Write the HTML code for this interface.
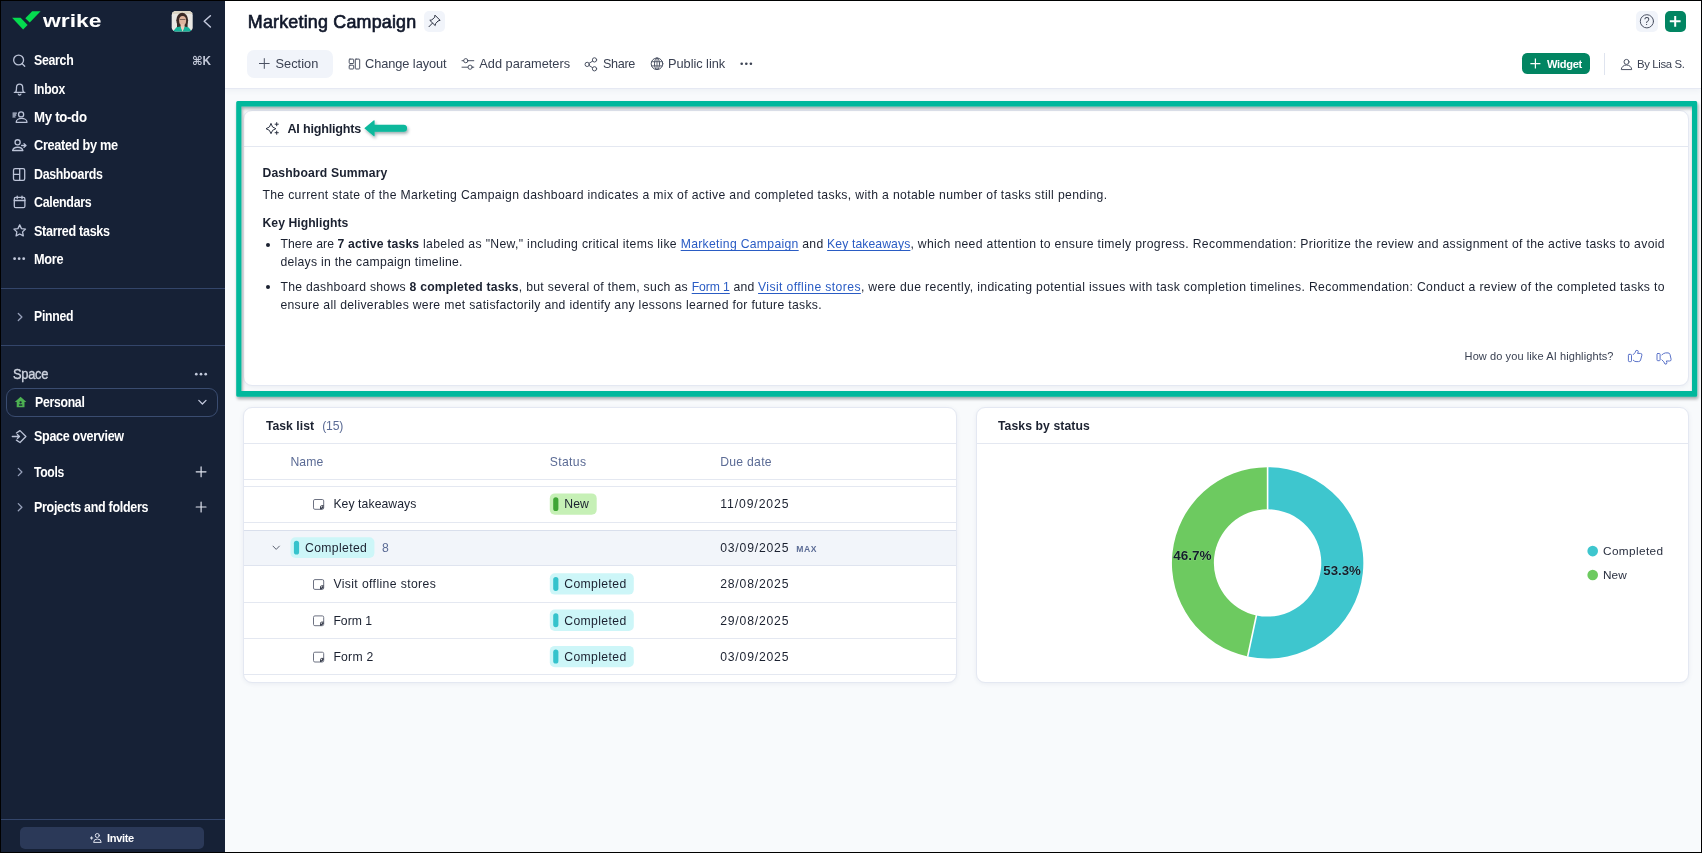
<!DOCTYPE html>
<html lang="en"><head><meta charset="utf-8"><title>Marketing Campaign - Wrike</title>
<style>
*{box-sizing:border-box;margin:0;padding:0}
html,body{width:1702px;height:853px;overflow:hidden;background:#000}
body{position:relative;font-family:"Liberation Sans","DejaVu Sans",sans-serif}
.a{position:absolute}
.t{position:absolute;white-space:nowrap;line-height:20px;height:20px}
.t b{font-weight:700}
.lk{color:#2a5cc4;text-decoration:underline;text-decoration-thickness:1px;text-underline-offset:2px}
#side{left:1px;top:1px;width:224px;height:851px;background:#162136}
#main{left:225px;top:1px;width:1476px;height:851px;background:#f8fafc}
#hdr{left:225px;top:1px;width:1476px;height:87px;background:#fff;box-shadow:0 1px 0 #e6e9f3,0 2px 6px rgba(60,80,130,.07)}
.sep{height:1px;background:#33456a;left:1px;width:224px}
.card{background:#fff;border:1px solid #e4e8f2;border-radius:9px;box-shadow:0 1px 4px rgba(60,80,130,.08)}
.hl{height:1px;background:#e4e8f1}
.btnlite{background:#f1f4fa;border-radius:5px}
.badge{border-radius:5px}
.bar{border-radius:3px}
</style></head>
<body>
<div class="a" id="main"></div>
<div class="a" id="hdr"></div>
<div class="a" id="side"></div>

<!-- sidebar pieces -->
<div class="a sep" style="top:288px"></div>
<div class="a sep" style="top:345px"></div>
<div class="a sep" style="top:819px"></div>
<div class="a" style="left:5.5px;top:388px;width:212.5px;height:28.5px;border:1px solid #3a4c70;border-radius:9px"></div>
<div class="a" style="left:20px;top:827px;width:184px;height:21.5px;background:#2b3958;border-radius:5px"></div>
<span class="a" id="wrike" style="left:43.3px;top:9px;font-size:19.2px;font-weight:700;color:#fff;line-height:24px;white-space:nowrap;transform-origin:0 0;transform:scaleX(1.19);letter-spacing:0px">wrike</span>

<!-- header buttons -->
<div class="a btnlite" style="left:423.5px;top:10.8px;width:21.5px;height:21.2px;border-radius:5px"></div>
<div class="a btnlite" style="left:247.2px;top:50.2px;width:85.5px;height:27.4px;border-radius:7px"></div>
<div class="a btnlite" style="left:1636px;top:10.9px;width:21.6px;height:20.8px;border-radius:5px"></div>
<div class="a" style="left:1664.6px;top:10.9px;width:21.2px;height:20.8px;border-radius:5px;background:#028562"></div>
<div class="a" style="left:1522px;top:53.4px;width:68px;height:21px;border-radius:5.5px;background:#028562"></div>
<div class="a" style="left:1604px;top:53px;width:1px;height:21.5px;background:#dfe4ef"></div>

<!-- AI highlights -->
<div class="a card" style="left:243px;top:110px;width:1446px;height:276px"></div>
<div class="a hl" style="left:244px;top:146px;width:1444px"></div>

<div class="a" style="left:265.6px;top:242.8px;width:4px;height:4px;border-radius:50%;background:#1b2130"></div>
<div class="a" style="left:265.6px;top:285.4px;width:4px;height:4px;border-radius:50%;background:#1b2130"></div>

<!-- Task list card -->
<div class="a card" style="left:243px;top:407px;width:714px;height:276px;overflow:hidden"></div>
<div class="a hl" style="left:244px;top:443px;width:712px"></div>
<div class="a hl" style="left:244px;top:479px;width:712px"></div>
<div class="a hl" style="left:244px;top:486px;width:712px"></div>
<div class="a hl" style="left:244px;top:522px;width:712px"></div>
<div class="a" style="left:244px;top:530px;width:712px;height:36px;background:#f2f5fa;border-top:1px solid #d9dfec;border-bottom:1px solid #dfe4ef"></div>
<div class="a hl" style="left:244px;top:602px;width:712px"></div>
<div class="a hl" style="left:244px;top:638px;width:712px"></div>
<div class="a hl" style="left:244px;top:674px;width:712px"></div>
<!-- badges -->
<svg class="a" style="left:0;top:0" width="1702" height="853" viewBox="0 0 1702 853">
<defs><filter id="fsh" x="-2%" y="-5%" width="104%" height="112%"><feDropShadow dx="1" dy="2.2" stdDeviation="1.7" flood-color="#0a1420" flood-opacity=".36"/></filter></defs>
<path filter="url(#fsh)" fill="#00b89c" fill-rule="evenodd" d="M237.7 101 H1695.7 Q1697.2 101 1697.2 102.5 V395.3 Q1697.2 396.8 1695.7 396.8 H237.7 Q236.2 396.8 236.2 395.3 V102.5 Q236.2 101 237.7 101 Z M241.4 106.6 V391.1 H1692 V106.6 Z"/>
<rect x="549.8" y="493.4" width="46.9" height="21.3" rx="5" fill="#c6f0b6"/><rect x="553.2" y="497.2" width="5.2" height="13.9" rx="2.6" fill="#3fa535"/>
<rect x="290.5" y="537.2" width="83.9" height="20.8" rx="5" fill="#cdf6f8"/><rect x="293.9" y="540.7" width="5.2" height="13.9" rx="2.6" fill="#35c3cc"/>
<rect x="549.8" y="573.3" width="84" height="21.3" rx="5" fill="#cdf6f8"/><rect x="553.2" y="577" width="5.2" height="13.9" rx="2.6" fill="#35c3cc"/>
<rect x="549.8" y="609.6" width="84" height="21.3" rx="5" fill="#cdf6f8"/><rect x="553.2" y="613.3" width="5.2" height="13.9" rx="2.6" fill="#35c3cc"/>
<rect x="549.8" y="645.9" width="84" height="21.3" rx="5" fill="#cdf6f8"/><rect x="553.2" y="649.6" width="5.2" height="13.9" rx="2.6" fill="#35c3cc"/>
</svg>

<!-- Chart card -->
<div class="a card" style="left:976px;top:407px;width:713px;height:276px"></div>
<div class="a hl" style="left:977px;top:443px;width:711px"></div>

<div class="a" id="txt" style="left:0;top:0;width:1702px;height:853px;will-change:transform">
<span class="t" id="t1" style="left:33.80px;top:50.30px;font-size:14.20px;font-weight:700;color:#ffffff;letter-spacing:-0.350px;transform-origin:0 50%;transform:scaleX(0.8710);">Search</span>
<span class="t" id="t2" style="left:33.80px;top:79.30px;font-size:14.20px;font-weight:700;color:#ffffff;letter-spacing:-0.350px;transform-origin:0 50%;transform:scaleX(0.8561);">Inbox</span>
<span class="t" id="t3" style="left:33.80px;top:107.30px;font-size:14.20px;font-weight:700;color:#ffffff;letter-spacing:-0.350px;transform-origin:0 50%;transform:scaleX(0.9354);">My to-do</span>
<span class="t" id="t4" style="left:33.80px;top:135.30px;font-size:14.20px;font-weight:700;color:#ffffff;letter-spacing:-0.350px;transform-origin:0 50%;transform:scaleX(0.8987);">Created by me</span>
<span class="t" id="t5" style="left:33.80px;top:164.30px;font-size:14.20px;font-weight:700;color:#ffffff;letter-spacing:-0.350px;transform-origin:0 50%;transform:scaleX(0.8738);">Dashboards</span>
<span class="t" id="t6" style="left:33.80px;top:192.30px;font-size:14.20px;font-weight:700;color:#ffffff;letter-spacing:-0.350px;transform-origin:0 50%;transform:scaleX(0.8768);">Calendars</span>
<span class="t" id="t7" style="left:33.80px;top:221.30px;font-size:14.20px;font-weight:700;color:#ffffff;letter-spacing:-0.350px;transform-origin:0 50%;transform:scaleX(0.8867);">Starred tasks</span>
<span class="t" id="t8" style="left:33.80px;top:249.30px;font-size:14.20px;font-weight:700;color:#ffffff;letter-spacing:-0.350px;transform-origin:0 50%;transform:scaleX(0.8979);">More</span>
<span class="t" id="t9" style="left:33.80px;top:306.30px;font-size:14.20px;font-weight:700;color:#ffffff;letter-spacing:-0.350px;transform-origin:0 50%;transform:scaleX(0.8650);">Pinned</span>
<span class="t" id="t10" style="left:191.70px;top:51.30px;font-size:12.40px;font-weight:700;color:#c3c9d9;letter-spacing:-0.350px;transform-origin:0 50%;transform:scaleX(0.9451);">&#8984;K</span>
<span class="t" id="t11" style="left:12.70px;top:364.30px;font-size:14.20px;font-weight:400;color:#cdd3df;letter-spacing:-0.350px;transform-origin:0 50%;transform:scaleX(0.9116);-webkit-text-stroke:0.35px #cdd3df;">Space</span>
<span class="t" id="t12" style="left:34.60px;top:392.30px;font-size:14.20px;font-weight:700;color:#ffffff;letter-spacing:-0.350px;transform-origin:0 50%;transform:scaleX(0.8663);">Personal</span>
<span class="t" id="t13" style="left:33.90px;top:426.30px;font-size:14.20px;font-weight:700;color:#ffffff;letter-spacing:-0.350px;transform-origin:0 50%;transform:scaleX(0.8840);">Space overview</span>
<span class="t" id="t14" style="left:33.90px;top:462.30px;font-size:14.20px;font-weight:700;color:#ffffff;letter-spacing:-0.350px;transform-origin:0 50%;transform:scaleX(0.8564);">Tools</span>
<span class="t" id="t15" style="left:33.90px;top:497.30px;font-size:14.20px;font-weight:700;color:#ffffff;letter-spacing:-0.350px;transform-origin:0 50%;transform:scaleX(0.8817);">Projects and folders</span>
<span class="t" id="t16" style="left:106.70px;top:828.30px;font-size:11.60px;font-weight:700;color:#ffffff;letter-spacing:-0.350px;transform-origin:0 50%;transform:scaleX(0.9533);">Invite</span>
<span class="t" id="t17" style="left:247.80px;top:12.30px;font-size:17.90px;font-weight:400;color:#10172a;letter-spacing:0.195px;-webkit-text-stroke:0.65px #10172a;">Marketing Campaign</span>
<span class="t" id="t18" style="left:275.50px;top:53.80px;font-size:12.80px;font-weight:400;color:#3a4152;letter-spacing:0.019px;">Section</span>
<span class="t" id="t19" style="left:365.10px;top:53.80px;font-size:12.80px;font-weight:400;color:#3a4152;letter-spacing:-0.086px;">Change layout</span>
<span class="t" id="t20" style="left:479.30px;top:53.80px;font-size:12.80px;font-weight:400;color:#3a4152;letter-spacing:-0.019px;">Add parameters</span>
<span class="t" id="t21" style="left:602.70px;top:53.80px;font-size:12.80px;font-weight:400;color:#3a4152;letter-spacing:-0.350px;transform-origin:0 50%;transform:scaleX(0.9861);">Share</span>
<span class="t" id="t22" style="left:668.00px;top:53.80px;font-size:12.80px;font-weight:400;color:#3a4152;letter-spacing:-0.042px;">Public link</span>
<span class="t" id="t23" style="left:1547.40px;top:54.30px;font-size:11.80px;font-weight:700;color:#ffffff;letter-spacing:-0.350px;transform-origin:0 50%;transform:scaleX(0.9421);">Widget</span>
<span class="t" id="t24" style="left:1637.30px;top:54.30px;font-size:11.40px;font-weight:400;color:#3a4152;letter-spacing:-0.350px;transform-origin:0 50%;transform:scaleX(0.9973);">By Lisa S.</span>
<span class="t" id="t25" style="left:287.40px;top:119.30px;font-size:12.60px;font-weight:700;color:#1b2130;letter-spacing:-0.189px;">AI highlights</span>
<span class="t" id="t26" style="left:262.50px;top:163.30px;font-size:12.20px;font-weight:700;color:#1b2130;letter-spacing:0.138px;">Dashboard Summary</span>
<span class="t" id="t27" style="left:262.40px;top:185.30px;font-size:12.20px;font-weight:400;color:#1b2130;letter-spacing:0.350px;">The current state of the Marketing Campaign dashboard indicates a mix of active and completed tasks, with a notable number of tasks still pending.</span>
<span class="t" id="t28" style="left:262.50px;top:213.30px;font-size:12.20px;font-weight:700;color:#1b2130;letter-spacing:0.036px;">Key Highlights</span>
<span class="t" id="t29" style="left:280.40px;top:234.30px;font-size:12.20px;font-weight:400;color:#1b2130;"><span class="sg" id="t29_s0" style="letter-spacing:0.097px">There are </span><span class="sg" id="t29_s1" style="letter-spacing:0.173px"><b>7 active tasks</b></span><span class="sg" id="t29_s2" style="letter-spacing:0.333px"> labeled as "New," including critical items like </span><span class="sg" id="t29_s3" style="letter-spacing:0.308px"><span class="lk">Marketing Campaign</span></span><span class="sg" id="t29_s4" style="letter-spacing:0.258px"> and </span><span class="sg" id="t29_s5" style="letter-spacing:0.102px"><span class="lk">Key takeaways</span></span><span class="sg" id="t29_s6" style="letter-spacing:0.335px">, which need attention to ensure timely progress. Recommendation: Prioritize the review and assignment of the active tasks to avoid</span></span>
<span class="t" id="t30" style="left:280.40px;top:252.30px;font-size:12.20px;font-weight:400;color:#1b2130;letter-spacing:0.276px;">delays in the campaign timeline.</span>
<span class="t" id="t31" style="left:280.40px;top:277.30px;font-size:12.20px;font-weight:400;color:#1b2130;"><span class="sg" id="t31_s0" style="letter-spacing:0.294px">The dashboard shows </span><span class="sg" id="t31_s1" style="letter-spacing:0.202px"><b>8 completed tasks</b></span><span class="sg" id="t31_s2" style="letter-spacing:0.336px">, but several of them, such as </span><span class="sg" id="t31_s3" style="letter-spacing:-0.085px"><span class="lk">Form 1</span></span><span class="sg" id="t31_s4" style="letter-spacing:0.238px"> and </span><span class="sg" id="t31_s5" style="letter-spacing:0.386px"><span class="lk">Visit offline stores</span></span><span class="sg" id="t31_s6" style="letter-spacing:0.357px">, were due recently, indicating potential issues with task completion timelines. Recommendation: Conduct a review of the completed tasks to</span></span>
<span class="t" id="t32" style="left:280.40px;top:295.30px;font-size:12.20px;font-weight:400;color:#1b2130;letter-spacing:0.321px;">ensure all deliverables were met satisfactorily and identify any lessons learned for future tasks.</span>
<span class="t" id="t33" style="left:1464.60px;top:346.30px;font-size:11.00px;font-weight:400;color:#3a4152;letter-spacing:0.095px;">How do you like AI highlights?</span>
<span class="t" id="t34" style="left:265.90px;top:416.30px;font-size:12.20px;font-weight:700;color:#1b2130;letter-spacing:0.041px;">Task list</span>
<span class="t" id="t35" style="left:322.20px;top:416.30px;font-size:12.20px;font-weight:400;color:#5b6b95;letter-spacing:-0.196px;">(15)</span>
<span class="t" id="t36" style="left:290.50px;top:452.30px;font-size:12.20px;font-weight:400;color:#5b6b95;letter-spacing:0.061px;">Name</span>
<span class="t" id="t37" style="left:549.80px;top:452.30px;font-size:12.20px;font-weight:400;color:#5b6b95;letter-spacing:0.328px;">Status</span>
<span class="t" id="t38" style="left:720.20px;top:452.30px;font-size:12.20px;font-weight:400;color:#5b6b95;letter-spacing:0.276px;">Due date</span>
<span class="t" id="t39" style="left:333.40px;top:494.30px;font-size:12.20px;font-weight:400;color:#1b2130;letter-spacing:0.086px;">Key takeaways</span>
<span class="t" id="t40" style="left:564.20px;top:494.30px;font-size:12.20px;font-weight:400;color:#1b2130;letter-spacing:0.155px;">New</span>
<span class="t" id="t41" style="left:720.20px;top:494.30px;font-size:12.20px;font-weight:400;color:#1b2130;letter-spacing:0.912px;">11/09/2025</span>
<span class="t" id="t42" style="left:305.00px;top:538.30px;font-size:12.20px;font-weight:400;color:#1b2130;letter-spacing:0.368px;">Completed</span>
<span class="t" id="t43" style="left:382.00px;top:538.30px;font-size:12.20px;font-weight:400;color:#5b6b95;letter-spacing:0.219px;">8</span>
<span class="t" id="t44" style="left:720.20px;top:538.30px;font-size:12.20px;font-weight:400;color:#1b2130;letter-spacing:0.811px;">03/09/2025</span>
<span class="t" id="t45" style="left:796.20px;top:539.30px;font-size:8.60px;font-weight:700;color:#5b6b95;letter-spacing:0.645px;">MAX</span>
<span class="t" id="t46" style="left:333.40px;top:574.30px;font-size:12.20px;font-weight:400;color:#1b2130;letter-spacing:0.385px;">Visit offline stores</span>
<span class="t" id="t47" style="left:564.20px;top:574.30px;font-size:12.20px;font-weight:400;color:#1b2130;letter-spacing:0.393px;">Completed</span>
<span class="t" id="t48" style="left:720.20px;top:574.30px;font-size:12.20px;font-weight:400;color:#1b2130;letter-spacing:0.811px;">28/08/2025</span>
<span class="t" id="t49" style="left:333.40px;top:611.30px;font-size:12.20px;font-weight:400;color:#1b2130;letter-spacing:0.018px;">Form 1</span>
<span class="t" id="t50" style="left:564.20px;top:611.30px;font-size:12.20px;font-weight:400;color:#1b2130;letter-spacing:0.393px;">Completed</span>
<span class="t" id="t51" style="left:720.20px;top:611.30px;font-size:12.20px;font-weight:400;color:#1b2130;letter-spacing:0.811px;">29/08/2025</span>
<span class="t" id="t52" style="left:333.40px;top:647.30px;font-size:12.20px;font-weight:400;color:#1b2130;letter-spacing:0.238px;">Form 2</span>
<span class="t" id="t53" style="left:564.20px;top:647.30px;font-size:12.20px;font-weight:400;color:#1b2130;letter-spacing:0.393px;">Completed</span>
<span class="t" id="t54" style="left:720.20px;top:647.30px;font-size:12.20px;font-weight:400;color:#1b2130;letter-spacing:0.811px;">03/09/2025</span>
<span class="t" id="t55" style="left:998.00px;top:416.30px;font-size:12.20px;font-weight:700;color:#1b2130;letter-spacing:0.082px;">Tasks by status</span>
<span class="t" id="t56" style="left:1603.00px;top:541.30px;font-size:11.80px;font-weight:400;color:#2a3040;letter-spacing:0.380px;">Completed</span>
<span class="t" id="t57" style="left:1603.00px;top:565.30px;font-size:11.80px;font-weight:400;color:#2a3040;letter-spacing:0.095px;">New</span>
</div>

<svg class="a" style="left:0;top:0" width="1702" height="853" viewBox="0 0 1702 853" fill="none">
<defs>
<filter id="ash" x="-20%" y="-50%" width="150%" height="220%"><feDropShadow dx="1.2" dy="2" stdDeviation="1.6" flood-color="#062a30" flood-opacity=".38"/></filter>
<filter id="blur1"><feGaussianBlur stdDeviation=".55"/></filter>
<clipPath id="avc"><rect x="171.7" y="11" width="21" height="20.6" rx="4.2"/></clipPath>
</defs>

<!-- wrike logo mark -->
<g fill="#05db4f">
<polygon points="12.1,17.8 20.6,17.8 27.6,25.0 23.1,29.4"/>
<polygon points="32.2,11.2 40.6,11.2 29.8,22.4 25.3,18.2"/>
</g>

<!-- avatar -->
<g clip-path="url(#avc)">
<rect x="171" y="10" width="23" height="23" fill="#e9e7e3"/>
<g filter="url(#blur1)">
<rect x="171" y="10" width="23" height="4" fill="#ddd6c6"/>
<ellipse cx="182.2" cy="20.2" rx="5.9" ry="7.4" fill="#3b2c27"/>
<rect x="177" y="20" width="10.6" height="8" fill="#3b2c27"/>
<ellipse cx="182.6" cy="20.6" rx="3.5" ry="4.6" fill="#deb39c"/>
<rect x="180.6" y="24" width="4" height="6" fill="#e6c3ad"/>
<path d="M172.5 32 L176.5 27.2 L180.6 26.4 L182.6 31 L184.6 26.4 L188.6 27.4 L192.4 32 Z" fill="#12b39a"/>
<path d="M180.6 26.4 L182.6 31.8 L184.6 26.4 Z" fill="#ecd0bd"/>
<path d="M179.8 19.5 H185.4" stroke="#3a3030" stroke-width=".6"/>
</g>
</g>

<!-- sidebar icons -->
<g stroke="#bcc4d8" stroke-width="1.3" stroke-linecap="round" stroke-linejoin="round">
<path d="M210.4 15.8 L204.2 21.3 L210.4 27" stroke="#c3c9dd" stroke-width="1.5"/>
<!-- search -->
<circle cx="18.6" cy="60" r="4.95"/><path d="M22.2 63.7 L24.7 66.3"/>
<!-- bell -->
<path d="M14.3 92.3 H24.9 M15.7 92.3 Q16.5 90.6 16.5 88.3 V87.6 A3.1 3.4 0 0 1 22.7 87.6 V88.3 Q22.7 90.6 23.5 92.3 M18.3 94.1 A1.35 1.2 0 0 0 20.9 94.1"/>
<!-- my to-do -->
<circle cx="21.1" cy="114.4" r="2.55"/><path d="M16.2 122.3 A5.4 3.9 0 0 1 27 122.3 Z"/>
<path d="M13 113.1 H16.4 M13 115 H15.8 M13 116.9 H15"/>
<!-- created by me -->
<circle cx="17.6" cy="142.3" r="2.55"/><path d="M12.6 150.5 A5.2 3.8 0 0 1 22.9 150.5 Z"/>
<path d="M21.6 145.5 H25.6 M24 143.6 L26 145.5 L24 147.4"/>
<!-- dashboards -->
<rect x="13.5" y="168.7" width="11.2" height="11.6" rx="1.6"/><path d="M19.7 168.7 V180.3 M13.5 174.4 H19.7"/>
<!-- calendar -->
<rect x="14.3" y="197.4" width="10.6" height="10.3" rx="1.5"/><path d="M14.3 200.5 H24.9 M17.2 196.1 V198.6 M22 196.1 V198.6"/>
<!-- star -->
<path d="M19.7 224.9 L21.45 228.6 L25.5 229.1 L22.55 231.9 L23.3 235.9 L19.7 233.95 L16.1 235.9 L16.85 231.9 L13.9 229.1 L17.95 228.6 Z"/>
<!-- chevrons -->
<path d="M18.3 313.5 L21.9 317 L18.3 320.5" stroke="#97a1ba"/>
<path d="M18.3 468.4 L21.9 472 L18.3 475.6" stroke="#97a1ba"/>
<path d="M18.3 503.6 L21.9 507.2 L18.3 510.8" stroke="#97a1ba"/>
<path d="M198.8 400.4 L202.4 404 L206 400.4" stroke="#c3c9dd"/>
<!-- plus -->
<path d="M196.2 471.8 H206 M201.1 466.9 V476.7" stroke="#dfe3ee" stroke-width="1.2"/>
<path d="M196.2 507 H206 M201.1 502.1 V511.9" stroke="#dfe3ee" stroke-width="1.2"/>
<!-- space overview -->
<path d="M16.4 433 L20 430.6 L25.9 436.5 L20 442.5 L16.4 440.1"/>
<path d="M12.3 436.5 H19.4 M17.4 434.5 L19.5 436.5 L17.4 438.5"/>
<!-- invite icon -->
<circle cx="97.3" cy="835.5" r="2" stroke="#dfe3ee" stroke-width="1"/><path d="M93.6 842 A3.8 3 0 0 1 101.2 842 Z" stroke="#dfe3ee" stroke-width="1"/>
<path d="M90.4 838 H92.8 M91.6 836.8 V839.2" stroke="#dfe3ee" stroke-width="1"/>
</g>
<g fill="#c3cadc">
<circle cx="14.6" cy="258.7" r="1.4"/><circle cx="19.15" cy="258.7" r="1.4"/><circle cx="23.7" cy="258.7" r="1.4"/>
<circle cx="196.3" cy="374.2" r="1.35"/><circle cx="201" cy="374.2" r="1.35"/><circle cx="205.7" cy="374.2" r="1.35"/>
</g>
<!-- house -->
<g fill="#4db152">
<path d="M20.6 396.8 L26.4 402 H24.5 V407.2 H16.7 V402 H14.8 Z"/>
</g>
<circle cx="20.6" cy="402.3" r="1.15" fill="#162136"/><rect x="18.9" y="404.4" width="3.4" height="1.3" fill="#162136"/>

<!-- header icons -->
<g stroke="#2c3242" stroke-width="1" stroke-linecap="round" stroke-linejoin="round">
<path d="M435.2 15.4 L440.1 20.3 L438 21 L435.6 23.6 L435.2 25.6 L429.8 20.3 L431.8 19.9 L434.4 17.6 Z M432.4 23.2 L429 26.7"/>
</g>
<g stroke="#4a5162" stroke-width="1" stroke-linecap="round" stroke-linejoin="round">
<path d="M259.4 63.5 H269.2 M264.3 58.6 V68.4"/>
<rect x="349.2" y="59.1" width="4.5" height="4.4" rx=".7"/><rect x="349.2" y="65.2" width="4.5" height="3.8" rx=".7"/><rect x="355.3" y="59.1" width="4.4" height="9.9" rx=".7"/>
<path d="M462 60.7 H463.6 M468 60.7 H473.8 M462 67.2 H467.9 M472.3 67.2 H473.8"/><circle cx="465.8" cy="60.7" r="2.1"/><circle cx="470.1" cy="67.2" r="2.1"/>
<circle cx="587.2" cy="64.4" r="2.15"/><circle cx="594.5" cy="59.9" r="2.15"/><circle cx="594.5" cy="68.8" r="2.15"/><path d="M589.1 63.3 L592.6 61.1 M589.1 65.5 L592.6 67.7"/>
<circle cx="657" cy="63.8" r="5.8"/><ellipse cx="657" cy="63.8" rx="2.5" ry="5.8"/><path d="M651.6 61.7 H662.4 M651.6 65.9 H662.4 M657 58 V69.6" stroke-width=".9"/>
<circle cx="1646.9" cy="21.3" r="6.6"/>
<circle cx="1626.5" cy="61.9" r="2.5"/><path d="M1621.3 69.2 A5.2 4.2 0 0 1 1631.7 69.2 Z"/>
</g>
<g fill="#3b4252"><circle cx="741.7" cy="63.7" r="1.3"/><circle cx="746.3" cy="63.7" r="1.3"/><circle cx="750.9" cy="63.7" r="1.3"/></g>
<text x="1646.9" y="25" font-size="10" font-family="Liberation Sans, sans-serif" fill="#3b4252" text-anchor="middle">?</text>
<path d="M1669.8 21.3 H1680.6 M1675.2 15.9 V26.7" stroke="#fff" stroke-width="2"/>
<path d="M1530.4 63.6 H1540.4 M1535.4 58.6 V68.6" stroke="#fff" stroke-width="1.2"/>

<!-- AI sparkle -->
<g stroke="#2c3242" stroke-width="1" stroke-linejoin="round" stroke-linecap="round">
<path d="M271 123.8 Q271.7 127.9 275.9 128.7 Q271.7 129.5 271 133.7 Q270.3 129.5 266 128.7 Q270.3 127.9 271 123.8 Z"/>
<path d="M276.7 122.6 V125.8 M275.1 124.2 H278.3 M276.7 131.1 V134.3 M275.1 132.7 H278.3"/>
</g>
<!-- green arrow -->
<g filter="url(#ash)">
<path d="M364.3 128.3 L373.6 120.6 Q374.6 119.9 374.6 121.2 L374.6 124.8 H403.6 A3.5 3.5 0 0 1 403.6 131.8 H374.6 L374.6 135.4 Q374.6 136.7 373.6 136 Z" fill="#08b89c"/>
</g>
<!-- thumbs -->
<g stroke="#5a72c8" stroke-width="1" stroke-linejoin="round" stroke-linecap="round">
<rect x="1628.4" y="354.4" width="3.1" height="7.2" rx=".8"/>
<path d="M1633.3 354.6 Q1635.6 352.6 1636.1 350.4 Q1638.4 350 1638.3 351.8 L1637.5 353.4 H1640.4 Q1642.2 353.4 1641.9 355.2 L1640.6 360 Q1640.1 361.6 1638.6 361.6 H1636 Q1634.4 361.5 1633.3 360.3"/>
<rect x="1657" y="353.5" width="3.1" height="7.2" rx=".8"/>
<path d="M1661.9 354.8 Q1663.8 353 1665.6 352.9 H1668 Q1669.6 352.9 1670 354.5 L1671.1 359.2 Q1671.4 361 1669.6 361 H1666.3 L1666.9 362.7 Q1667 364.5 1665 364.1 Q1664.3 361.8 1661.9 359.8"/>
</g>
<!-- task icons -->
<g stroke="#3a3f4d" stroke-width="1" stroke-linejoin="round">
<g><rect x="313.5" y="499.5" width="10.2" height="9.8" rx="1.4" stroke="#6d7282"/><path d="M323.7 505.7 H321.6 Q320.5 505.7 320.5 506.8 V509.3" /><path d="M321.2 508.9 L323.3 506.4" stroke-width="1.6"/></g><g transform="translate(0 80.1)"><rect x="313.5" y="499.5" width="10.2" height="9.8" rx="1.4" stroke="#6d7282"/><path d="M323.7 505.7 H321.6 Q320.5 505.7 320.5 506.8 V509.3" /><path d="M321.2 508.9 L323.3 506.4" stroke-width="1.6"/></g><g transform="translate(0 116.4)"><rect x="313.5" y="499.5" width="10.2" height="9.8" rx="1.4" stroke="#6d7282"/><path d="M323.7 505.7 H321.6 Q320.5 505.7 320.5 506.8 V509.3" /><path d="M321.2 508.9 L323.3 506.4" stroke-width="1.6"/></g><g transform="translate(0 152.7)"><rect x="313.5" y="499.5" width="10.2" height="9.8" rx="1.4" stroke="#6d7282"/><path d="M323.7 505.7 H321.6 Q320.5 505.7 320.5 506.8 V509.3" /><path d="M321.2 508.9 L323.3 506.4" stroke-width="1.6"/></g>

<path d="M273 546.1 L276.2 549.4 L279.4 546.1" stroke="#5a6070" stroke-linecap="round"/>
</g>

<!-- donut -->
<g>
<path d="M1267.6 467.2 A95.7 95.7 0 1 1 1247.7 656.5 L1256.42 615.43 A53.7 53.7 0 1 0 1267.6 509.2 Z" fill="#3ec6ce"/>
<path d="M1247.7 656.5 A95.7 95.7 0 0 1 1267.6 467.2 L1267.6 509.2 A53.7 53.7 0 0 0 1256.42 615.43 Z" fill="#6dca60"/>
<path d="M1267.6 466.8 V509.6 M1247.6 656.9 L1256.5 615" stroke="#fff" stroke-width="1.6"/>
<circle cx="1592.7" cy="551.1" r="5.3" fill="#3ec6ce"/><circle cx="1592.7" cy="575" r="5.3" fill="#6dca60"/>
<g font-family="Liberation Sans, sans-serif" font-weight="700" font-size="12.4" fill="#14202b" text-anchor="middle" stroke="#ffffff" stroke-opacity=".25" stroke-width=".6" paint-order="stroke">
<text x="1192.4" y="559.9" textLength="38.4" lengthAdjust="spacingAndGlyphs">46.7%</text>
<text x="1342.1" y="574.7" textLength="37.6" lengthAdjust="spacingAndGlyphs">53.3%</text>
</g>
</g>
</svg>

</body></html>
